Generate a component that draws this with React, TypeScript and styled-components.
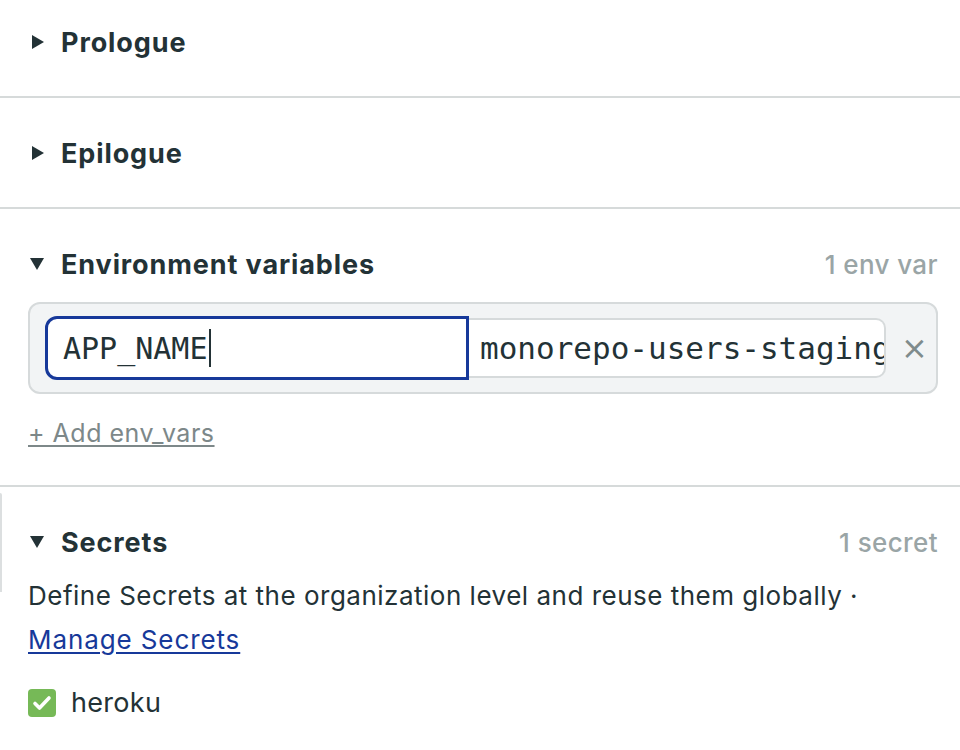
import React from 'react'
import styled, { createGlobalStyle } from 'styled-components'

const GlobalStyle = createGlobalStyle`
  body {
    margin: 0;
    background: #fff;
    font-family: Inter, "Noto Sans", sans-serif;
    color: #233236;
  }
`

const App = () => {
  return (
    <>
      <GlobalStyle />
      <Page>
        <Section first>
          <Header>
            <Caret />
            <Title>Prologue</Title>
          </Header>
        </Section>
        <Section>
          <Header>
            <Caret />
            <Title>Epilogue</Title>
          </Header>
        </Section>
        <Section tight>
          <Header>
            <Caret open />
            <Title>Environment variables</Title>
            <Count>1 env var</Count>
          </Header>
          <EnvBox>
            <NameInput>
              APP_NAME<Cursor />
            </NameInput>
            <ValueInput>monorepo-users-staging</ValueInput>
            <Remove>×</Remove>
          </EnvBox>
          <AddLink>+ Add env_vars</AddLink>
        </Section>
        <Section edge last>
          <Header>
            <Caret open />
            <Title>Secrets</Title>
            <Count>1 secret</Count>
          </Header>
          <Desc>
            Define Secrets at the organization level and reuse them globally · <Link>Manage Secrets</Link>
          </Desc>
          <CheckRow>
            <Check>
              <svg width="22" height="22" viewBox="0 0 22 22">
                <path d="M4 11.5l4.5 4.5 9.5-10" fill="none" stroke="#fff" strokeWidth="3.6" strokeLinecap="round" strokeLinejoin="round" />
              </svg>
            </Check>
            <CheckLabel>heroku</CheckLabel>
          </CheckRow>
        </Section>
      </Page>
    </>
  )
}

export default App

const Page = styled.div`
  width: 960px;
  height: 750px;
  overflow: hidden;
`
const Section = styled.div<{ first?: boolean; last?: boolean; edge?: boolean; tight?: boolean }>`
  position: relative;
  padding: ${p => (p.first ? '27px' : '40px')} 22px ${p => (p.last ? '0' : p.tight ? '37px' : '39px')} 28px;
  border-bottom: ${p => (p.last ? 'none' : '2px solid #d6dada')};
  ${p =>
    p.edge &&
    `
    &::before {
      content: '';
      position: absolute;
      left: 0;
      top: 6px;
      width: 2px;
      height: 99px;
      background: #dcdfe0;
      border-top-right-radius: 3px;
    }
  `}
`
const Header = styled.div`
  display: flex;
  align-items: center;
  height: 30px;
`
const Caret = styled.span<{ open?: boolean }>`
  width: 0;
  height: 0;
  ${p =>
    p.open
      ? `
    border-left: 7px solid transparent;
    border-right: 7px solid transparent;
    border-top: 12px solid #233236;
    margin-left: 2px;
    margin-right: 17px;
  `
      : `
    border-top: 7px solid transparent;
    border-bottom: 7px solid transparent;
    border-left: 12px solid #233236;
    margin-left: 4px;
    margin-right: 17px;
  `}
`
const Title = styled.h2`
  margin: 0;
  font-size: 27px;
  font-weight: 700;
  color: #233236;
  letter-spacing: 0.9px;
`
const Count = styled.span`
  margin-left: auto;
  font-size: 26px;
  font-weight: 500;
  letter-spacing: 0.4px;
  color: #9aa5a6;
`
const EnvBox = styled.div`
  margin-top: 23px;
  box-sizing: border-box;
  height: 92px;
  display: flex;
  align-items: center;
  padding: 0 15px;
  background: #f2f4f5;
  border: 2px solid #d6dadb;
  border-radius: 12px;
`
const NameInput = styled.div`
  width: 424px;
  height: 64px;
  box-sizing: border-box;
  display: flex;
  align-items: center;
  padding-left: 15px;
  background: #fff;
  border: 3px solid #17399a;
  border-radius: 12px 0 0 12px;
  font-family: "DejaVu Sans Mono", monospace;
  font-size: 30px;
  color: #233236;
  flex-shrink: 0;
`
const Cursor = styled.span`
  display: inline-block;
  width: 2px;
  height: 38px;
  background: #233236;
  margin-left: 1px;
`
const ValueInput = styled.div`
  width: 417px;
  height: 60px;
  box-sizing: border-box;
  display: flex;
  align-items: center;
  padding: 0 2px 0 11px;
  background: #fff;
  border: 2px solid #d6dadb;
  border-left: none;
  border-radius: 0 10px 10px 0;
  font-family: "DejaVu Sans Mono", monospace;
  font-size: 31px;
  color: #233236;
  white-space: nowrap;
  overflow: hidden;
  flex-shrink: 0;
`
const Remove = styled.span`
  margin-left: 15px;
  font-size: 32px;
  color: #7f8b8c;
  font-family: "DejaVu Sans", sans-serif;
`
const AddLink = styled.a`
  display: block;
  margin-top: 24px;
  font-size: 25px;
  line-height: 30px;
  letter-spacing: 0.5px;
  color: #7d8889;
  text-decoration: underline;
  text-underline-offset: 3px;
`
const Desc = styled.p`
  margin: 17px 0 0;
  font-size: 26px;
  line-height: 44px;
  letter-spacing: 0.5px;
  color: #233236;
`
const Link = styled.a`
  color: #17399a;
  text-decoration: underline;
  text-underline-offset: 3px;
  letter-spacing: 0.9px;
`
const CheckRow = styled.div`
  display: flex;
  align-items: center;
  margin-top: 24px;
`
const Check = styled.span`
  width: 28px;
  height: 28px;
  border-radius: 4px;
  background: #76b957;
  display: flex;
  align-items: center;
  justify-content: center;
  margin-right: 15px;
`
const CheckLabel = styled.span`
  font-size: 27px;
  letter-spacing: 0.3px;
  color: #233236;
`
